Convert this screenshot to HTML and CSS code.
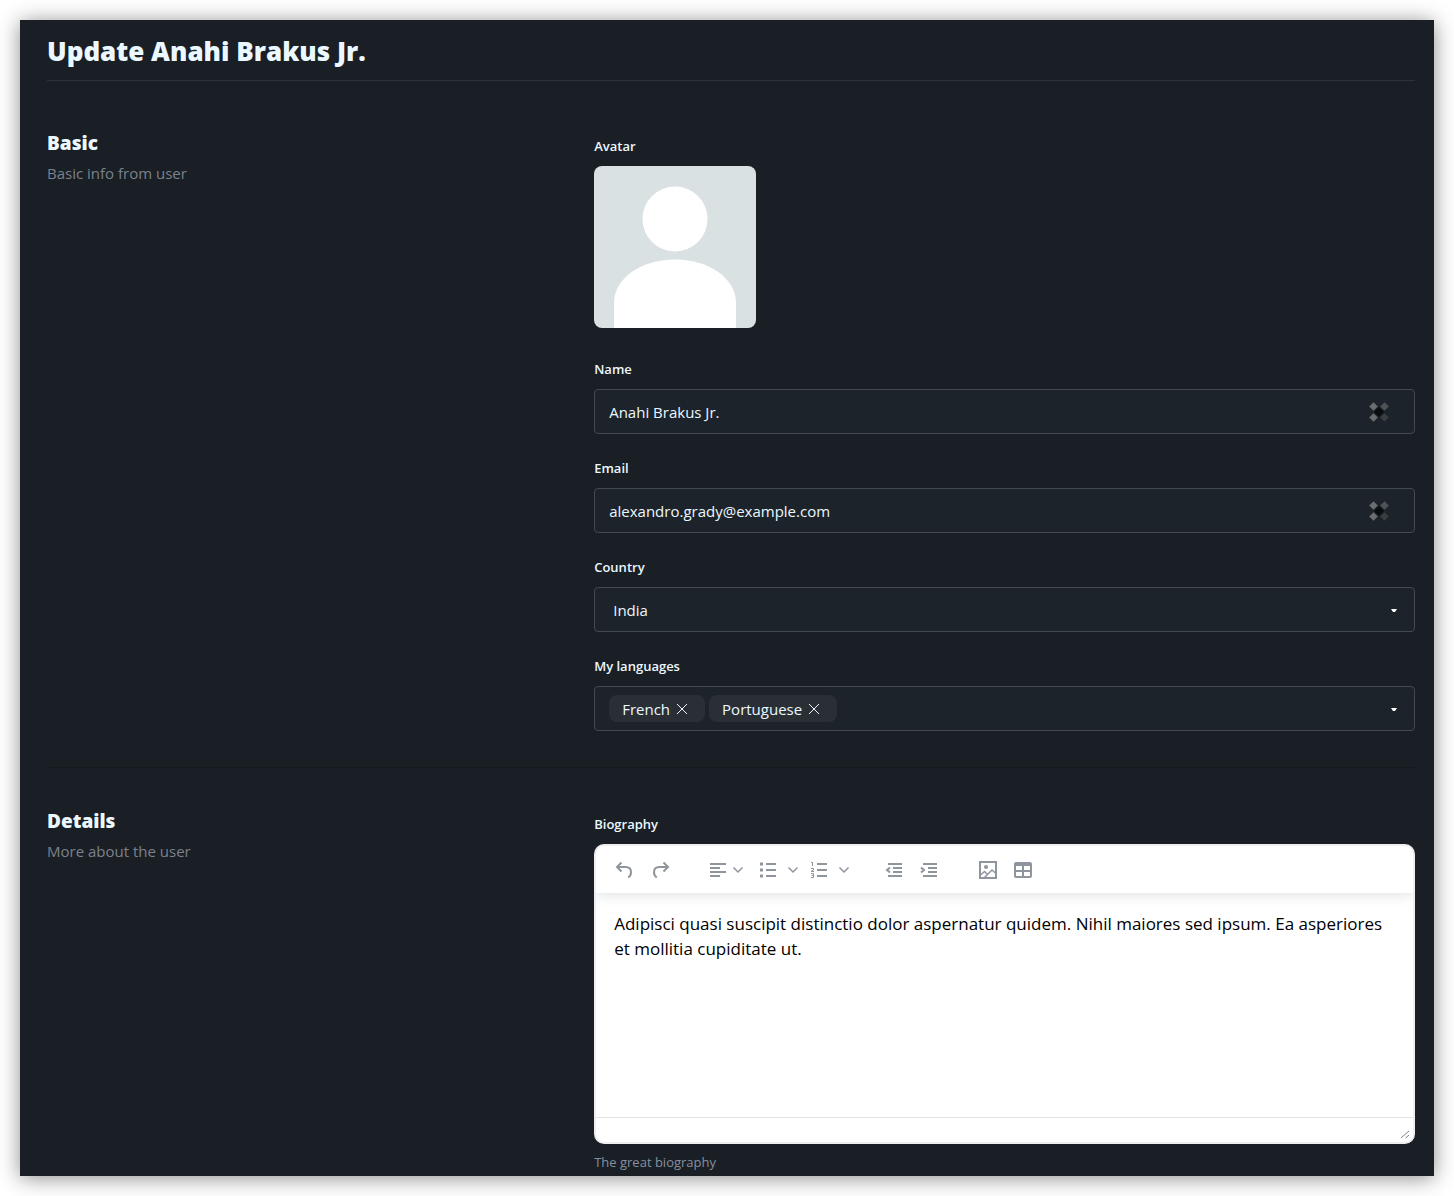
FILE: index.html
```html
<!DOCTYPE html>
<html lang="en">
  <head>
    <meta charset="UTF-8" />
    <meta name="viewport" content="width=device-width, initial-scale=1.0" />
    <title>Update Anahi Brakus Jr.</title>
    <link rel="stylesheet" href="styles.css">
  </head>
  <body>
    <form class="panel">
      <h1>Update Anahi Brakus Jr.</h1>

      <section class="section">
        <div class="intro">
          <h2>Basic</h2>
          <p>Basic info from user</p>
        </div>
        <div class="fields">
          <div class="form-group avatar-group">
            <span class="label">Avatar</span>
            <svg class="avatar" viewBox="0 0 162 162" role="img" aria-label="Avatar">
              <rect width="162" height="162" fill="#dae1e3" />
              <circle cx="81" cy="53" r="32.5" fill="#fff" />
              <path d="M20 162V137C20 113 46 93.500 81 93.500S142 113 142 137V162Z" fill="#fff" />
            </svg>
          </div>

          <div class="form-group">
            <label class="label" for="name">Name</label>
            <div class="control">
              <input class="box" type="text" id="name" name="name" value="Anahi Brakus Jr." />
              <svg class="autofill" viewBox="0 0 22 22" aria-hidden="true">
                <path d="M11 6 16 11 11 16 6 11Z" fill="#0b0e11" />
                <path d="M5.500 1.200 9.800 5.500 5.500 9.800 1.200 5.500Z" fill="#6b6e71" />
                <path d="M16.500 1.200 20.800 5.500 16.500 9.800 12.200 5.500Z" fill="#505355" />
                <path d="M5.500 12.200 9.800 16.500 5.500 20.800 1.200 16.500Z" fill="#6b6e71" />
                <path d="M16.500 12.200 20.800 16.500 16.500 20.800 12.200 16.500Z" fill="#3b3e40" />
              </svg>
            </div>
          </div>

          <div class="form-group">
            <label class="label" for="email">Email</label>
            <div class="control">
              <input class="box" type="email" id="email" name="email" value="alexandro.grady@example.com" />
              <svg class="autofill" viewBox="0 0 22 22" aria-hidden="true">
                <path d="M11 6 16 11 11 16 6 11Z" fill="#0b0e11" />
                <path d="M5.500 1.200 9.800 5.500 5.500 9.800 1.200 5.500Z" fill="#6b6e71" />
                <path d="M16.500 1.200 20.800 5.500 16.500 9.800 12.200 5.500Z" fill="#505355" />
                <path d="M5.500 12.200 9.800 16.500 5.500 20.800 1.200 16.500Z" fill="#6b6e71" />
                <path d="M16.500 12.200 20.800 16.500 16.500 20.800 12.200 16.500Z" fill="#3b3e40" />
              </svg>
            </div>
          </div>

          <div class="form-group">
            <label class="label" for="country">Country</label>
            <div class="control">
              <select class="box select" id="country" name="country">
                <option>India</option>
              </select>
              <svg class="caret" viewBox="0 0 6 3" aria-hidden="true"><path d="M0 0H6L4 3H2Z" /></svg>
            </div>
          </div>

          <div class="form-group">
            <span class="label" id="languages">My languages</span>
            <div class="control">
              <div class="box tags" role="group" aria-labelledby="languages">
                <span class="tag">French
                  <button type="button" aria-label="Remove French">
                    <svg viewBox="0 0 12 12"><path d="M1 1 11 11M11 1 1 11" /></svg>
                  </button>
                </span>
                <span class="tag">Portuguese
                  <button type="button" aria-label="Remove Portuguese">
                    <svg viewBox="0 0 12 12"><path d="M1 1 11 11M11 1 1 11" /></svg>
                  </button>
                </span>
              </div>
              <svg class="caret" viewBox="0 0 6 3" aria-hidden="true"><path d="M0 0H6L4 3H2Z" /></svg>
            </div>
          </div>
        </div>
      </section>

      <section class="section">
        <div class="intro">
          <h2>Details</h2>
          <p>More about the user</p>
        </div>
        <div class="fields">
          <div class="form-group">
            <label class="label" for="biography">Biography</label>
            <div class="editor">
              <div class="toolbar" role="toolbar" aria-label="Formatting">
                <div class="tools history">
                  <button type="button" aria-label="Undo">
                    <svg viewBox="0 0 18 18"><path d="M6.500 1.500 2 6l4.500 4.500M2 6h8.500c3.500 0 5.500 2.200 5.500 5.200 0 2.200-.8 4-2.800 5.300" /></svg>
                  </button>
                  <button type="button" aria-label="Redo">
                    <svg viewBox="0 0 18 18"><path d="M11.500 1.500 16 6l-4.500 4.500M16 6H7.500C4 6 2 8.200 2 11.200c0 2.200.8 4 2.800 5.300" /></svg>
                  </button>
                </div>
                <div class="tools lists">
                  <button type="button" class="align" aria-label="Align">
                    <svg viewBox="0 0 18 18"><path d="M1 3h16M1 7h10M1 11h16M1 15h10" /></svg>
                    <svg class="chevron" viewBox="0 0 12 8"><path d="m1.500 1.500 4.500 4.500 4.500-4.500" /></svg>
                  </button>
                  <button type="button" aria-label="Bullet list">
                    <svg viewBox="0 0 18 18"><path d="M7 3h10M7 9h10M7 15h10" /><path class="fill" d="M1 1.500h3v3H1zM1 7.500h3v3H1zM1 13.500h3v3H1z" /></svg>
                    <svg class="chevron" viewBox="0 0 12 8"><path d="m1.500 1.500 4.500 4.500 4.500-4.500" /></svg>
                  </button>
                  <button type="button" aria-label="Numbered list">
                    <svg viewBox="0 0 18 18"><path d="M7 3h10M7 9h10M7 15h10" /><path class="thin" d="M1 1.500h1.500V5M1 7.500h2.500V9L1 10.500h3M1 12.500h2.500v4H1M1.500 14.500h2" /></svg>
                    <svg class="chevron" viewBox="0 0 12 8"><path d="m1.500 1.500 4.500 4.500 4.500-4.500" /></svg>
                  </button>
                </div>
                <div class="tools indents">
                  <button type="button" aria-label="Decrease indent">
                    <svg viewBox="0 0 18 18"><path d="M3 3h14M8 7h9M8 11h9M3 15h14M5 6.500 2 9l3 2.500" /></svg>
                  </button>
                  <button type="button" aria-label="Increase indent">
                    <svg viewBox="0 0 18 18"><path d="M3 3h14M8 7h9M8 11h9M3 15h14M1 6.500 4 9l-3 2.500" /></svg>
                  </button>
                </div>
                <div class="tools">
                  <button type="button" aria-label="Insert image">
                    <svg viewBox="0 0 18 18"><path d="M1 1h16v16H1z" /><path class="slim" d="M1.500 14 5.500 10.500 8.500 13.500 13 9l4 3.500M5.500 16.500l3-3" /><circle class="fill" cx="7" cy="6" r="2" /></svg>
                  </button>
                  <button type="button" aria-label="Insert table">
                    <svg viewBox="0 0 18 18"><rect x="1" y="2" width="16" height="14" rx="1" /><path d="M1 3.500h16M1 10h16M9 5v11" /><path class="fill" d="M1 2h16v3H1z" /></svg>
                  </button>
                </div>
              </div>
              <textarea id="biography" name="biography">Adipisci quasi suscipit distinctio dolor aspernatur quidem. Nihil maiores sed ipsum. Ea asperiores et mollitia cupiditate ut.</textarea>
              <div class="statusbar">
                <svg viewBox="0 0 10 10" aria-hidden="true"><path d="M1 9 9 2M5.500 9 9 6" /></svg>
              </div>
            </div>
            <p class="help">The great biography</p>
          </div>
        </div>
      </section>
    </form>
  </body>
</html>
```
FILE: styles.css
```css
* {
  box-sizing: border-box;
}
body {
  margin: 0;
  padding: 20px;
  background: #fff;
  color: #ebf8ff;
  font-family: "Open Sans", "Noto Sans", sans-serif;
  font-size: 15px;
  line-height: 24px;
}
h1,
h2,
p {
  margin: 0;
}
.panel {
  padding: 12px 19px 4px 27px;
  background: #1a1e25;
  box-shadow: 0 2px 20px rgba(0, 0, 0, 0.45);
}
h1 {
  margin-bottom: 9px;
  padding-bottom: 10px;
  border-bottom: 1px solid #2e333a;
  font-size: 26px;
  font-weight: 800;
  line-height: 38px;
}
.section {
  display: grid;
  grid-template-columns: 2fr 3fr;
  padding: 46px 0 36px;
  border-bottom: 1px solid #15191d;
}
.section:last-child {
  padding-bottom: 0;
  border-bottom: 0;
}
h2 {
  margin-bottom: 6px;
  font-size: 19px;
  font-weight: 800;
}
.intro {
  margin-top: -5px;
}
.intro p {
  color: #7a828b;
}
.fields {
  display: flex;
  flex-direction: column;
  gap: 24px;
  min-width: 0;
}
.avatar-group {
  margin-bottom: 7px;
}
.label {
  display: block;
  margin-bottom: 10px;
  font-size: 13px;
  font-weight: 600;
  line-height: 20px;
}
.avatar {
  display: block;
  width: 162px;
  height: 162px;
  border-radius: 8px;
}
.control {
  position: relative;
}
.box {
  display: block;
  width: 100%;
  height: 45px;
  padding: 0 14px;
  border: 1px solid #434951;
  border-radius: 4px;
  background: #1d232a;
  color: inherit;
  font: inherit;
}
.select {
  padding-left: 18px;
  appearance: none;
}
.autofill {
  position: absolute;
  top: 12px;
  right: 25px;
  width: 22px;
  height: 22px;
}
.caret {
  position: absolute;
  top: 22px;
  right: 18px;
  width: 6px;
  height: 3px;
  fill: #fff;
}
.tags {
  display: flex;
  align-items: center;
  gap: 4px;
}
.tag {
  display: flex;
  align-items: center;
  gap: 6px;
  height: 27px;
  padding: 0 17px 0 13px;
  border-radius: 8px;
  background: #2a2f36;
}
button {
  display: flex;
  align-items: center;
  padding: 0;
  border: 0;
  background: none;
  cursor: pointer;
}
.tag svg {
  width: 12px;
  height: 12px;
  fill: none;
  stroke: #ebf8ff;
}
.editor {
  overflow: hidden;
  border: 2px solid #eee;
  border-radius: 10px;
  background: #fff;
}
.toolbar {
  display: flex;
  gap: 35px;
  height: 47px;
  padding: 0 19px;
  box-shadow: 0 2px 12px rgba(34, 47, 62, 0.14);
}
.tools {
  display: flex;
  align-items: center;
  gap: 17px;
}
.history {
  gap: 19px;
  padding-right: 4px;
}
.lists {
  gap: 11px;
}
.indents {
  padding-right: 6px;
}
.tools button {
  gap: 10px;
}
.tools .align {
  gap: 5px;
  padding-right: 4px;
}
.tools svg {
  width: 18px;
  height: 18px;
  fill: none;
  stroke: #8f959d;
  stroke-width: 2;
}
.tools .chevron {
  width: 12px;
  height: 8px;
  stroke-width: 1.5;
}
.tools .fill {
  fill: #8f959d;
  stroke: none;
}
.tools .thin {
  stroke-width: 1;
}
.tools .slim {
  stroke-width: 1.5;
}
textarea {
  display: block;
  width: 100%;
  height: 224px;
  padding: 18px;
  border: 0;
  background: transparent;
  color: #000;
  font: inherit;
  font-size: 17px;
  line-height: 25px;
  resize: none;
}
.statusbar {
  display: flex;
  align-items: flex-end;
  justify-content: flex-end;
  height: 25px;
  padding: 3px;
  border-top: 1px solid #e3e3e3;
}
.statusbar svg {
  width: 10px;
  height: 10px;
  fill: none;
  stroke: #7d838a;
}
.help {
  margin-top: 8px;
  color: #8590a0;
  font-size: 13px;
  line-height: 20px;
}
```
